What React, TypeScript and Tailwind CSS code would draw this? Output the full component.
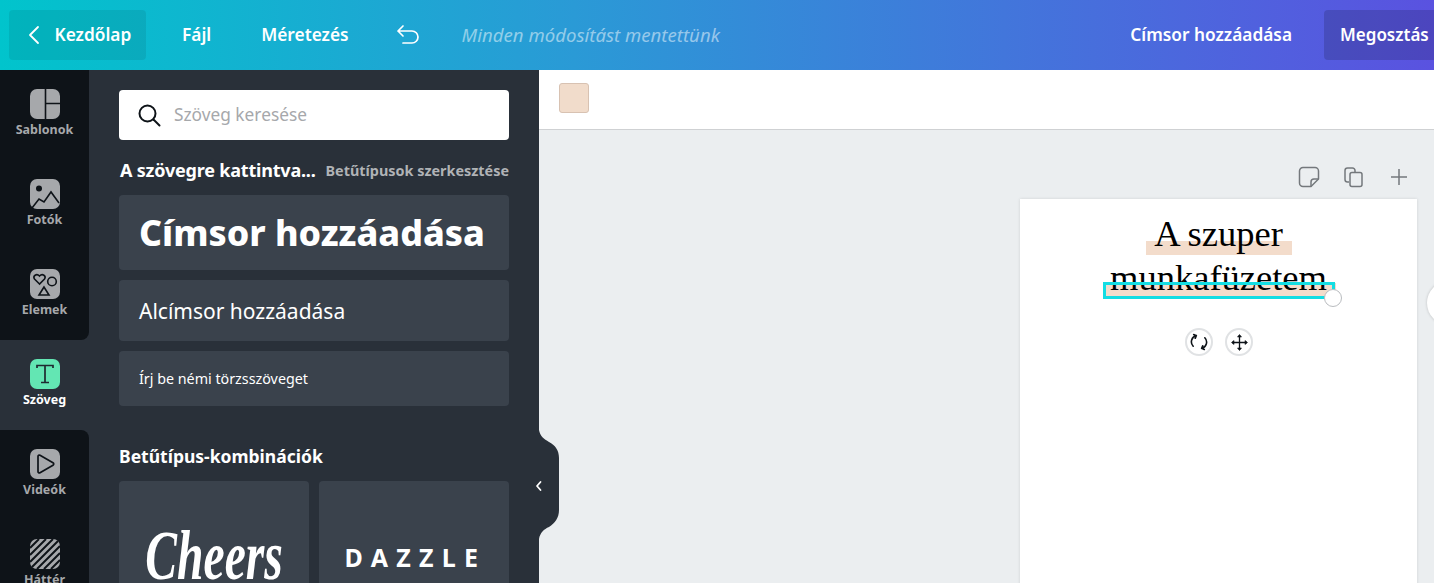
import React from "react";

const font = { fontFamily: '"Noto Sans", "Open Sans", sans-serif' };

function RailIcon({ children, active }: { children: React.ReactNode; active?: boolean }) {
  return (
    <svg width="30" height="30" viewBox="0 0 30 30" className="block">
      <rect width="30" height="30" rx="7" fill={active ? "#63e6b3" : "#a6a8ab"} />
      {children}
    </svg>
  );
}

const dark = "#0e1318";

const items = [
  {
    label: "Sablonok",
    icon: (
      <RailIcon>
        <path d="M15.500 0v30M15.500 14.500H30" stroke={dark} strokeWidth="1.6" fill="none" />
      </RailIcon>
    ),
  },
  {
    label: "Fotók",
    icon: (
      <RailIcon>
        <circle cx="9" cy="9.500" r="3" fill={dark} />
        <path d="M2 29l7-9 5 3 7-10 8 11" stroke={dark} strokeWidth="1.6" fill="none" />
      </RailIcon>
    ),
  },
  {
    label: "Elemek",
    icon: (
      <RailIcon>
        <path d="M9.500 15 4.500 10c-2-3 2-6 5-3 3-3 7 0 5 3z" stroke={dark} strokeWidth="1.6" fill="none" />
        <circle cx="22" cy="12.500" r="4.300" stroke={dark} strokeWidth="1.6" fill="none" />
        <path d="M14 18 9 26h10z" stroke={dark} strokeWidth="1.6" fill="none" />
      </RailIcon>
    ),
  },
  {
    label: "Szöveg",
    active: true,
    icon: (
      <RailIcon active>
        <path d="M7 9V6.500h16V9M15 6.500v17M11 23.500h8" stroke="#1f2a30" strokeWidth="1.7" fill="none" />
      </RailIcon>
    ),
  },
  {
    label: "Videók",
    icon: (
      <RailIcon>
        <path d="M8 7.500v15c0 1.200 1 1.800 2 1.200l13-7.500c1-.6 1-1.800 0-2.400L10 6.300c-1-.6-2 0-2 1.200z" stroke={dark} strokeWidth="1.7" fill="none" />
      </RailIcon>
    ),
  },
  {
    label: "Háttér",
    icon: (
      <RailIcon>
        <path d="M0 9 9 0M0 16 16 0M0 23 23 0M2 28 28 2M7 30 30 7M14 30 30 14M21 30 30 21" stroke={dark} strokeWidth="2" fill="none" />
      </RailIcon>
    ),
  },
];

function RailItem({ label, icon, active, round }: { label: string; icon: React.ReactNode; active?: boolean; round?: string }) {
  return (
    <div className={`h-[90px] shrink-0 flex flex-col items-center pt-[19px] ${active ? "" : "bg-[#0e1318]"} ${round ?? ""}`}>
      {icon}
      <div className={`mt-[2px] text-[12.500px] leading-[17px] font-bold ${active ? "text-white" : "text-[#a6a8ab]"}`}>{label}</div>
    </div>
  );
}

export default function App() {
  return (
    <div className="w-[1434px] h-[583px] overflow-hidden flex flex-col bg-[#ebeef0]" style={font}>
      <header className="h-[70px] shrink-0 flex items-center pl-[9px] text-white bg-[linear-gradient(90deg,#01c4cc_0%,#2a9ad6_40%,#5a52e0_100%)]">
        <div className="w-[137px] h-[50px] rounded-[4px] bg-black/8 flex items-center pl-[18px]">
          <svg width="14" height="20" viewBox="0 0 14 20" fill="none" stroke="white" strokeWidth="1.8" strokeLinecap="round" strokeLinejoin="round">
            <path d="M11 2 3 10l8 8" />
          </svg>
          <span className="ml-[13.500px] text-[17.300px] font-semibold">Kezdőlap</span>
        </div>
        <span className="ml-[36px] text-[17.300px] font-semibold">Fájl</span>
        <span className="ml-[50px] text-[17.300px] font-semibold">Méretezés</span>
        <svg className="ml-[46px]" width="26" height="22" viewBox="0 0 26 22" fill="none" stroke="white" strokeWidth="1.7" strokeLinecap="round" strokeLinejoin="round">
          <path d="M8 2 3 7l5 5M3 7h14a5.500 5.500 0 0 1 0 12h-9" />
        </svg>
        <span className="ml-[41px] text-[18.600px] italic text-white/50">Minden módosítást mentettünk</span>
        <span className="ml-auto text-[17.300px] font-semibold">Címsor hozzáadása</span>
        <div className="ml-[32px] w-[110px] h-[50px] rounded-l-[4px] bg-black/15 flex items-center pl-[16px] text-[17px] font-semibold whitespace-nowrap">Megosztás</div>
      </header>

      <div className="flex-1 flex min-h-0">
        <nav className="w-[89px] shrink-0 flex flex-col bg-[#293039] overflow-hidden">
          {items.map((it, i) => (
            <RailItem
              key={it.label}
              label={it.label}
              icon={it.icon}
              active={it.active}
              round={i === 2 ? "rounded-br-[8px]" : i === 4 ? "rounded-tr-[8px]" : ""}
            />
          ))}
        </nav>

        <aside className="w-[450px] shrink-0 bg-[#293039] px-[30px] pt-[20px] text-white relative">
          <div className="h-[50px] rounded-[4px] bg-white flex items-center pl-[17px]">
            <svg width="26" height="26" viewBox="0 0 26 26" fill="none" stroke="#0e1318" strokeWidth="2" strokeLinecap="round">
              <circle cx="11.500" cy="11.500" r="8" />
              <path d="m17.500 17.500 6 6" />
            </svg>
            <span className="ml-[12px] -mt-[1px] text-[17.300px] text-[#a6a8ab]">Szöveg keresése</span>
          </div>

          <div className="mt-[18px] h-[25px] flex items-center justify-between">
            <span className="text-[18px] font-bold tracking-[-0.2px] ml-[1px] whitespace-nowrap">A szövegre kattintva...</span>
            <span className="text-[14.400px] font-bold text-[#b0b3b6] whitespace-nowrap">Betűtípusok szerkesztése</span>
          </div>

          <div className="mt-[12px] h-[75px] rounded-[4px] bg-[#3a424c] flex items-center pl-[20px] text-[35.800px] font-extrabold whitespace-nowrap">Címsor hozzáadása</div>
          <div className="mt-[10px] h-[61px] rounded-[4px] bg-[#3a424c] flex items-center pl-[20px] pt-[2px] text-[21px]">Alcímsor hozzáadása</div>
          <div className="mt-[10px] h-[55px] rounded-[4px] bg-[#3a424c] flex items-center pl-[20px] text-[14.300px]">Írj be némi törzsszöveget</div>

          <div className="mt-[38px] text-[17.500px] leading-[24px] font-bold">Betűtípus-kombinációk</div>
          <div className="mt-[13px] grid grid-cols-2 gap-[10px]">
            <div className="h-[190px] rounded-[4px] bg-[#3a424c] flex justify-center pt-[30px] overflow-hidden">
              <span className="text-[70px] leading-[90px] italic font-bold origin-top scale-x-[0.68] whitespace-nowrap" style={{ fontFamily: '"Liberation Serif", serif' }}>Cheers</span>
            </div>
            <div className="h-[190px] rounded-[4px] bg-[#3a424c] flex justify-center pt-[58px] overflow-hidden">
              <span className="text-[25px] leading-[36px] font-bold tracking-[8.300px] pl-[3px]">DAZZLE</span>
            </div>
          </div>

          <svg className="absolute left-full top-[360px]" width="20" height="109" viewBox="0 0 20 109" fill="#293039">
            <path d="M0 0C1 6 5 9 10 12 16 15 20 20 20 28V80C20 88 16 93 10 97 5 99 1 103 0 109z" />
          </svg>
          <svg className="absolute left-[446px] top-[410px]" width="8" height="12" viewBox="0 0 8 12" fill="none" stroke="white" strokeWidth="1.800" strokeLinecap="round" strokeLinejoin="round">
            <path d="M5.500 2 2 6l3.500 4" />
          </svg>
        </aside>

        <main className="flex-1 min-w-0 flex flex-col">
          <div className="h-[60px] shrink-0 bg-white border-b border-[#cfd1d3] pl-[20px] pt-[13px]">
            <div className="w-[30px] h-[30px] rounded-[3px] bg-[#f1dccb] border border-[#d8c2b2]" />
          </div>

          <div className="flex-1 min-h-0 relative overflow-hidden">
            <div className="flex justify-end items-center gap-[23px] pr-[24px] pt-[25px] h-[69px]">
              <svg width="22" height="22" viewBox="0 0 22 22" fill="none" stroke="#74787c" strokeWidth="1.500" strokeLinejoin="round">
                <path d="M5 1.500h12a3.500 3.500 0 0 1 3.500 3.500v8L13 20.500H5A3.500 3.500 0 0 1 1.500 17V5A3.500 3.500 0 0 1 5 1.500z" />
                <path d="M20.500 13H16a3 3 0 0 0-3 3v4.500" />
              </svg>
              <svg width="22" height="22" viewBox="0 0 22 22" fill="none" stroke="#74787c" strokeWidth="1.500" strokeLinejoin="round">
                <path d="M6 16H4.500A2.500 2.500 0 0 1 2 13.500v-9A2.500 2.500 0 0 1 4.500 2h5A2.500 2.500 0 0 1 12 4.500V6" />
                <rect x="7" y="6.500" width="12" height="14" rx="2" />
              </svg>
              <svg width="22" height="22" viewBox="0 0 22 22" fill="none" stroke="#74787c" strokeWidth="1.500">
                <path d="M11 3v16M3 11h16" />
              </svg>
            </div>

            <div className="absolute left-[481px] top-[69px] w-[397px] h-[400px] bg-white shadow-[0_0_3px_rgba(0,0,0,0.12)]">
              <div className="absolute left-[126px] top-[42px] w-[146px] h-[14px] bg-[#f3dccb]" />
              <div className="absolute left-[86px] top-[84px] w-[230px] h-[16px] bg-[#f3dccb]" />
              <div
                className="absolute left-0 top-[13px] w-full text-center text-[36.500px] leading-[44px] text-black"
                style={{ fontFamily: '"Liberation Serif", serif' }}
              >
                A szuper
                <br />
                munkafüzetem
              </div>
              <div className="absolute left-[83px] top-[83px] w-[232px] h-[17px] border-[3px] border-[#13dde3]" />
              <div className="absolute left-[304px] top-[90px] w-[18px] h-[18px] rounded-full bg-white border border-[#b9bcbf]" />
              <div className="absolute left-[165px] top-[129px] w-[28px] h-[28px] rounded-full bg-white border-2 border-[#e0e2e4] flex items-center justify-center">
                <svg width="18" height="18" viewBox="0 0 17 17" fill="none" stroke="#0e1318" strokeWidth="1.500" strokeLinecap="round" strokeLinejoin="round">
                  <path d="M3 12.500A6 6 0 0 1 6 2.500M3.500 1.500 6 2.500 5 5M14 4.500A6 6 0 0 1 11 14.500M13.500 15.500 11 14.500 12 12" />
                </svg>
              </div>
              <div className="absolute left-[205px] top-[129px] w-[28px] h-[28px] rounded-full bg-white border-2 border-[#e0e2e4] flex items-center justify-center">
                <svg width="19" height="19" viewBox="0 0 19 19" fill="#0e1318" stroke="#0e1318" strokeWidth="1.300" strokeLinejoin="round">
                  <path d="M9.500 2v15M2 9.500h15" fill="none" />
                  <path d="M9.500 1.500 7.500 4h4zM9.500 17.500l-2-2.500h4zM1.500 9.500 4 7.500v4zM17.500 9.500 15 7.500v4z" strokeWidth="0.600" />
                </svg>
              </div>
            </div>

            <div className="absolute left-[888px] top-[151px] w-[44px] h-[44px] rounded-full bg-white shadow-[0_0_3px_rgba(0,0,0,0.2)]" />
          </div>
        </main>
      </div>
    </div>
  );
}
